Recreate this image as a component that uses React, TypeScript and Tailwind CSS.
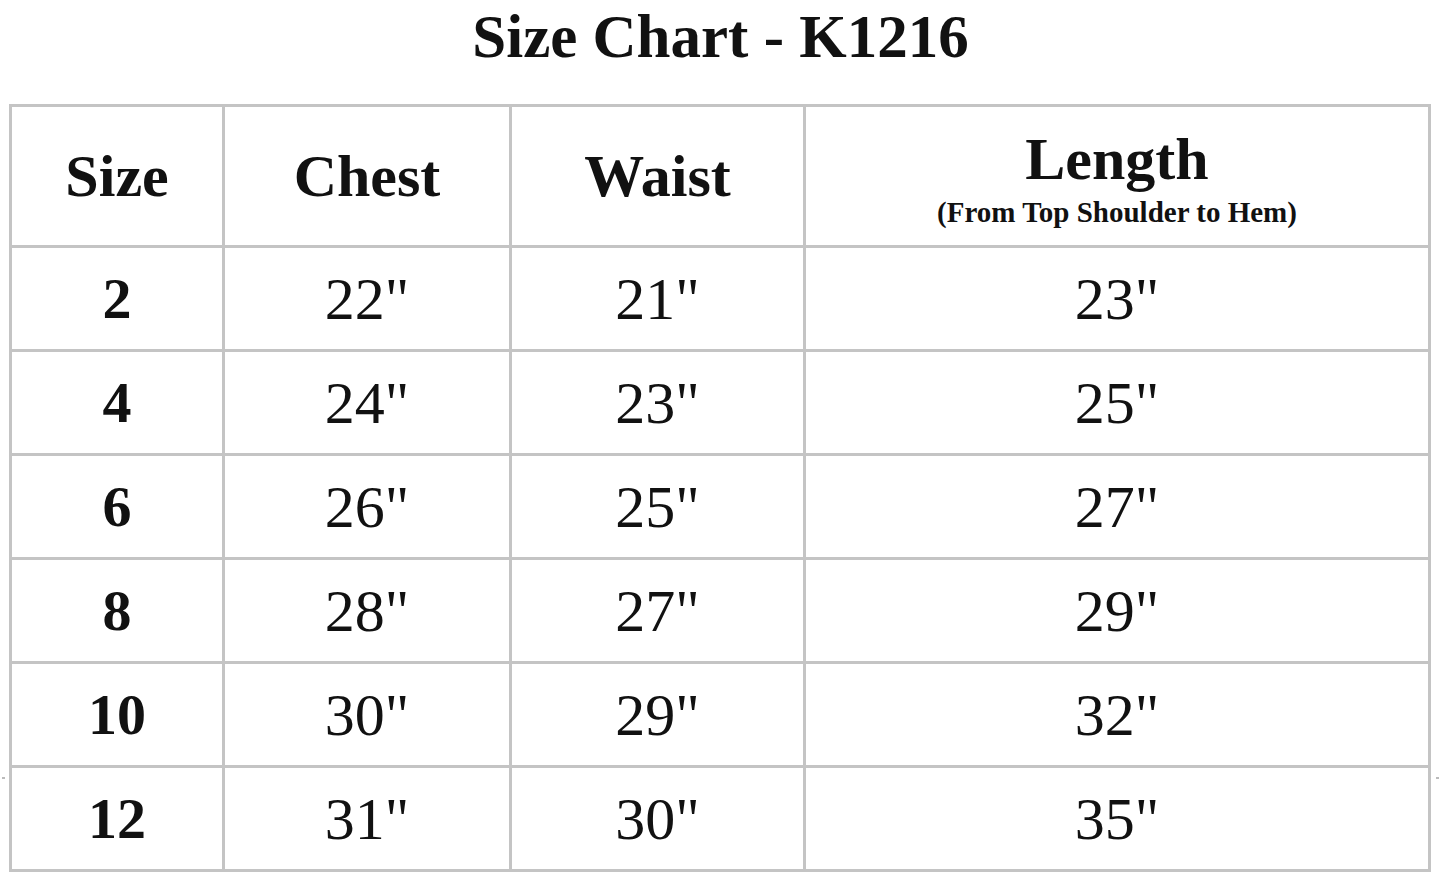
const rows = [
  { size: "2", chest: '22"', waist: '21"', length: '23"' },
  { size: "4", chest: '24"', waist: '23"', length: '25"' },
  { size: "6", chest: '26"', waist: '25"', length: '27"' },
  { size: "8", chest: '28"', waist: '27"', length: '29"' },
  { size: "10", chest: '30"', waist: '29"', length: '32"' },
  { size: "12", chest: '31"', waist: '30"', length: '35"' },
];

const cell = "border-[3px] border-[#c4c4c4] text-center align-middle p-0";

export default function App() {
  return (
    <div
      className="relative w-[1445px] h-[879px] bg-white text-[#111] overflow-hidden"
      style={{ fontFamily: '"Liberation Serif", "Times New Roman", serif' }}
    >
      <h1 className="pt-[6px] pr-[4px] text-center text-[61px] leading-none font-bold">
        Size Chart - K1216
      </h1>

      <table className="mt-[37px] ml-[9px] w-[1419px] table-fixed border-collapse">
        <colgroup>
          <col className="w-[213px]" />
          <col className="w-[287px]" />
          <col className="w-[294px]" />
          <col className="w-[625px]" />
        </colgroup>
        <thead>
          <tr className="h-[141px]">
            <th className={`${cell} text-[60px] leading-none font-bold`}>Size</th>
            <th className={`${cell} text-[60px] leading-none font-bold`}>Chest</th>
            <th className={`${cell} text-[60px] leading-none font-bold`}>Waist</th>
            <th className={`${cell} font-bold`}>
              <div className="text-[60px] leading-none pt-[4px]">Length</div>
              <div className="text-[29px] leading-none mt-[9px]">(From Top Shoulder to Hem)</div>
            </th>
          </tr>
        </thead>
        <tbody>
          {rows.map((r) => (
            <tr key={r.size} className="h-[104px]">
              <td className={`${cell} text-[58px] leading-none font-bold`}>{r.size}</td>
              <td className={`${cell} text-[60px] leading-none`}>{r.chest}</td>
              <td className={`${cell} text-[60px] leading-none`}>{r.waist}</td>
              <td className={`${cell} text-[60px] leading-none`}>{r.length}</td>
            </tr>
          ))}
        </tbody>
      </table>

      {/* little scan marks outside the table */}
      <div className="absolute left-[2px] top-[777px] w-[3px] h-[2px] bg-[#bbb]" />
      <div className="absolute left-[1436px] top-[777px] w-[3px] h-[2px] bg-[#bbb]" />
    </div>
  );
}
